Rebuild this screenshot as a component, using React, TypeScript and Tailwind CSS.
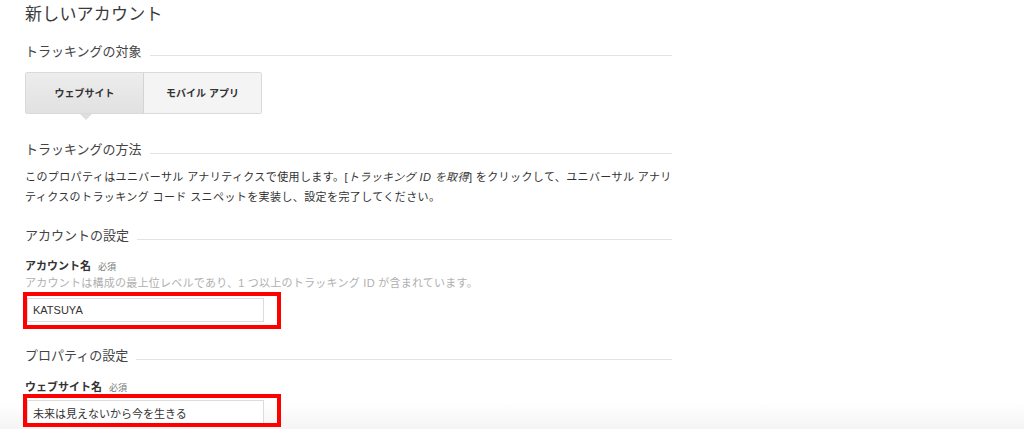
import React from "react";

const SectionHeader = ({ title, className = "" }: { title: string; className?: string }) => (
  <div className={`flex items-end gap-[8px] w-[647px] h-[20px] ${className}`}>
    <h2 className="text-[13px] leading-[20px] text-[#444] whitespace-nowrap">{title}</h2>
    <div className="flex-1 h-px bg-[#e3e3e3] mb-[6px]" />
  </div>
);

const FieldLabel = ({ label, className = "" }: { label: string; className?: string }) => (
  <div className={`flex items-baseline gap-[7px] h-[14px] leading-[14px] ${className}`}>
    <span className="text-[11px] font-bold text-[#333]">{label}</span>
    <span className="text-[9px] text-[#777]">必須</span>
  </div>
);

export default function App() {
  return (
    <div className="relative h-[429px] w-[1024px] overflow-hidden bg-[linear-gradient(to_bottom,#ffffff_402px,#f4f4f4)] pl-[25px] pt-[5px] font-['Liberation_Sans','Noto_Sans_CJK_JP',sans-serif] text-[#333]">
      <h1 className="text-[17px] leading-[20px] text-[#3a3a3a] tracking-[0.2px]">新しいアカウント</h1>

      <SectionHeader title="トラッキングの対象" className="mt-[17px]" />

      <div className="relative mt-[10px] flex w-[237px] h-[42px] border border-[#dadada] rounded-[2px]">
        <button
          type="button"
          className="relative w-[118px] h-full bg-[linear-gradient(to_bottom,#ededed,#e1e1e1)] border-r border-[#d4d4d4] text-[10px] font-bold text-[#333]"
        >
          ウェブサイト
          <span className="absolute left-[54px] top-[41px] w-0 h-0 border-l-[6px] border-r-[6px] border-t-[6px] border-l-transparent border-r-transparent border-t-[#dedede]" />
        </button>
        <button
          type="button"
          className="flex-1 h-full bg-[#f4f4f4] text-[10px] font-bold text-[#333]"
        >
          モバイル アプリ
        </button>
      </div>

      <SectionHeader title="トラッキングの方法" className="mt-[26px]" />

      <p className="mt-[7px] text-[11px] leading-[20px] tracking-[0.4px] text-[#333] whitespace-nowrap">
        このプロパティはユニバーサル アナリティクスで使用します。[<i>トラッキング ID を取得</i>] をクリックして、ユニバーサル アナリ
        <br />
        ティクスのトラッキング コード スニペットを実装し、設定を完了してください。
      </p>

      <SectionHeader title="アカウントの設定" className="mt-[19px]" />

      <FieldLabel label="アカウント名" className="mt-[13px]" />
      <p className="mt-[2px] text-[11px] leading-[16px] tracking-[0.25px] text-[#b0b0b0]">
        アカウントは構成の最上位レベルであり、1 つ以上のトラッキング ID が含まれています。
      </p>

      <div className="-ml-[2px] mt-[1px] w-[258px] h-[37px] border-[4px] border-[#ff0000] pt-[2px]">
        <input
          readOnly
          value="KATSUYA"
          className="block w-[237px] h-[24px] border border-[#dcdcdc] bg-white px-[5px] text-[11px] text-[#333] outline-none"
        />
      </div>

      <SectionHeader title="プロパティの設定" className="mt-[17px]" />

      <FieldLabel label="ウェブサイト名" className="mt-[14px]" />

      <div className="-ml-[2px] w-[258px] h-[33px] border-[4px] border-[#ff0000] pt-[2px] overflow-hidden">
        <input
          readOnly
          value="未来は見えないから今を生きる"
          className="block w-[237px] h-[25px] border border-[#dcdcdc] bg-white px-[5px] text-[11px] text-[#333] outline-none"
        />
      </div>
    </div>
  );
}
